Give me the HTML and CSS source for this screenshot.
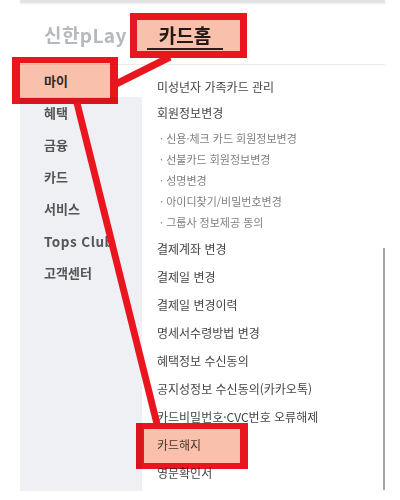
FILE: index.html
```html
<!DOCTYPE html>
<html lang="ko">
<head>
<meta charset="utf-8">
<link rel="stylesheet" href="styles.css">
</head>
<body>
<div class="page">
  <div class="topbar"></div>
  <header class="header">
    <div class="logo">신한pLay</div>
    <div class="tab hl">카드홈</div>
  </header>
  <div class="main">
    <nav class="side">
      <div class="side-item active hl">마이</div>
      <div class="side-rest">
        <div class="side-item">혜택</div>
        <div class="side-item">금융</div>
        <div class="side-item">카드</div>
        <div class="side-item">서비스</div>
        <div class="side-item latin">Tops Club</div>
        <div class="side-item">고객센터</div>
      </div>
    </nav>
    <div class="content">
      <ul class="menu">
        <li class="mi tight">미성년자 가족카드 관리</li>
        <li class="mi tight">회원정보변경</li>
        <li>
          <ul class="sub">
            <li>· 신용·체크 카드 회원정보변경</li>
            <li>· 선불카드 회원정보변경</li>
            <li>· 성명변경</li>
            <li>· 아이디찾기/비밀번호변경</li>
            <li>· 그룹사 정보제공 동의</li>
          </ul>
        </li>
        <li class="mi">결제계좌 변경</li>
        <li class="mi">결제일 변경</li>
        <li class="mi">결제일 변경이력</li>
        <li class="mi">명세서수령방법 변경</li>
        <li class="mi">혜택정보 수신동의</li>
        <li class="mi">공지성정보 수신동의(카카오톡)</li>
        <li class="mi">카드비밀번호·CVC번호 오류해제</li>
        <li class="mi hl-item"><span class="hl">카드해지</span></li>
        <li class="mi">영문확인서</li>
      </ul>
      <div class="scroll"></div>
    </div>
  </div>
  <svg class="arrows" width="400" height="500" viewBox="0 0 400 500">
    <line x1="116" y1="84" x2="170" y2="57" />
    <line x1="77" y1="103" x2="157" y2="424" />
  </svg>
</div>
</body>
</html>
```

FILE: styles.css
```css
html, body {
  margin: 0;
  padding: 0;
  background: #ffffff;
}

body {
  font-family: "Noto Sans CJK KR", "Noto Sans", sans-serif;
}

.page {
  position: relative;
  width: 400px;
  height: 500px;
  overflow: hidden;
}

.topbar {
  margin-left: 20px;
  width: 365px;
  height: 3px;
  background: #e3e3e3;
  box-shadow: 0 1px 2px rgba(0, 0, 0, 0.08);
}

.header {
  box-sizing: border-box;
  margin-left: 20px;
  width: 365px;
  height: 62px;
  padding: 20px 0 0 24px;
  display: flex;
  align-items: flex-start;
  border-bottom: 1px solid #ececec;
}

.logo {
  width: 103px;
  flex: none;
  font-size: 19px;
  font-weight: 700;
  line-height: 24px;
  letter-spacing: 0.4px;
  color: #b5b9be;
  white-space: nowrap;
}

.tab {
  width: 76px;
  flex: none;
  text-align: center;
  font-size: 19px;
  font-weight: 700;
  line-height: 24px;
  color: #222;
  padding-bottom: 1px;
  border-bottom: 2px solid #2a2a2a;
}

.hl {
  position: relative;
}

.hl::after {
  content: "";
  position: absolute;
  box-sizing: border-box;
  border: 7px solid #e8161e;
  background: #f9c1ab;
  mix-blend-mode: multiply;
}

.tab.hl::after {
  left: -17px;
  top: -10px;
  width: 117px;
  height: 45px;
}

.main {
  display: flex;
  margin-left: 20px;
  width: 365px;
  height: 435px;
}

.side {
  width: 122px;
  height: 426px;
  flex: none;
  display: flex;
  flex-direction: column;
}

.side-item {
  height: 32px;
  line-height: 32px;
  padding-left: 24px;
  font-size: 13px;
  font-weight: 700;
  color: #555;
  white-space: nowrap;
}

.side-item.latin {
  font-size: 13.5px;
  letter-spacing: 0.5px;
}

.side-item.active {
  background: #ffffff;
  color: #333;
}

.side-item.hl::after {
  left: -8px;
  top: -8px;
  width: 106px;
  height: 47px;
  border-width: 6px 8px;
}

.side-rest {
  flex: 1;
  background: #eef0f3;
}

.content {
  position: relative;
  flex: 1;
  padding: 9px 0 0 15px;
}

.menu,
.sub {
  list-style: none;
  margin: 0;
  padding: 0;
}

.mi {
  height: 28px;
  line-height: 28px;
  font-size: 12px;
  color: #454545;
  white-space: nowrap;
}

.mi.tight {
  height: 26px;
  line-height: 26px;
}

.sub {
  padding: 2px 0;
}

.sub li {
  height: 21px;
  line-height: 21px;
  font-size: 11px;
  color: #808080;
  padding-left: 3px;
  white-space: nowrap;
}

.hl-item .hl {
  display: inline-block;
}

.hl-item .hl::after {
  left: -21px;
  top: -8px;
  width: 112px;
  height: 46px;
  border-width: 6px 8px;
}

.scroll {
  position: absolute;
  right: 0;
  top: 183px;
  width: 2px;
  height: 242px;
  background: #a3a3a3;
}

.arrows {
  position: absolute;
  left: 0;
  top: 0;
  pointer-events: none;
}

.arrows line {
  stroke: #e8161e;
  stroke-width: 7;
}
```
